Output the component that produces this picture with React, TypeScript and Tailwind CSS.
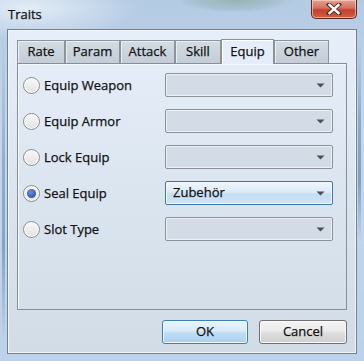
import React from "react";

const tabs = [
  { label: "Rate", w: "w-[48px]" },
  { label: "Param", w: "w-[55px]" },
  { label: "Attack", w: "w-[55px]" },
  { label: "Skill", w: "w-[46px]" },
  { label: "Equip", w: "w-[53px]", active: true },
  { label: "Other", w: "w-[55px]" },
];

const rows = [
  { label: "Equip Weapon" },
  { label: "Equip Armor" },
  { label: "Lock Equip" },
  { label: "Seal Equip", checked: true, value: "Zubehör" },
  { label: "Slot Type" },
];

function Arrow() {
  return (
    <svg width="9" height="5" viewBox="0 0 9 5" className="shrink-0">
      <path d="M0.5 0.5 H8.5 L4.5 4.5 Z" fill="#4f4f4f" />
    </svg>
  );
}

function Radio({ checked }: { checked?: boolean }) {
  return (
    <div className="w-[17px] h-[17px] rounded-full border border-[#8b8b8b] bg-[linear-gradient(180deg,#f8f8f8_0%,#e2e2e2_100%)] shadow-[inset_0_0_0_1px_#ffffff] flex items-center justify-center shrink-0">
      {checked && (
        <div className="w-[9px] h-[9px] rounded-full bg-[radial-gradient(circle_at_40%_35%,#6f93d8_0%,#2f58b0_70%,#24469a_100%)]" />
      )}
    </div>
  );
}

export default function App() {
  return (
    <div className="relative w-[364px] h-[361px] overflow-hidden flex flex-col px-[7px] pb-[7px] bg-[linear-gradient(180deg,#b4cbe4_0%,#c2d7ed_35%,#bcd2ea_100%)] font-['Open_Sans',sans-serif] text-[13px] text-[#111] [-webkit-text-stroke:0.25px_#111]">
      {/* glass decoration */}
      <div className="absolute left-[180px] top-[-14px] w-[110px] h-[26px] rounded-full bg-[radial-gradient(ellipse_at_center,#8aa79a_0%,#a3bccc_55%,transparent_75%)] opacity-70" />
      <div className="absolute left-0 top-0 w-[140px] h-[40px] bg-[radial-gradient(ellipse_at_20%_20%,#e3ecf6_0%,transparent_70%)]" />
      <div className="absolute left-[2px] top-[40px] w-[3px] h-[300px] bg-[linear-gradient(180deg,transparent_0%,#7f9dbd_40%,#6d8eb2_70%,transparent_100%)] opacity-70" />
      <div className="absolute right-[3px] top-[40px] w-[3px] h-[200px] bg-[linear-gradient(180deg,transparent_0%,#7896b8_40%,#6787ad_70%,transparent_100%)] opacity-70" />

      {/* title bar */}
      <div className="relative h-[29px] flex items-start justify-between shrink-0">
        <div className="pl-[1px] pt-[5px] text-[13px] text-[#111]">Traits</div>
        <div className="w-[46px] h-[19px] rounded-b-[5px] border border-t-0 border-[#5a2a24] bg-[linear-gradient(180deg,#e8a093_0%,#d4705d_45%,#c2412a_55%,#cf5f43_100%)] shadow-[inset_0_0_0_1px_rgba(255,220,210,0.6)] flex items-center justify-center">
          <svg width="16" height="12" viewBox="0 0 16 12">
            <path d="M3 1.5 L13 10.5 M13 1.5 L3 10.5" stroke="#4a2a26" strokeWidth="4.2" strokeLinecap="square" />
            <path d="M3.5 2 L12.5 10 M12.5 2 L3.5 10" stroke="#ffffff" strokeWidth="2.4" strokeLinecap="square" />
          </svg>
        </div>
      </div>

      {/* client area */}
      <div className="relative flex-1 flex flex-col border border-[#6e8197] bg-[linear-gradient(180deg,#e6eef9_0%,#dbe5f0_50%,#d2dce7_100%)] shadow-[inset_0_0_0_1px_#f2f6fb] p-[9px]">
        {/* tabs */}
        <div className="flex items-end h-[24px] relative z-10">
          {tabs.map((t) =>
            t.active ? (
              <div
                key={t.label}
                className={`${t.w} h-[25px] -mb-[1px] border border-b-0 border-[#8a9099] bg-[#e4edf8] shadow-[inset_1px_1px_0_#ffffff] flex items-center justify-center pb-[1px]`}
              >
                {t.label}
              </div>
            ) : (
              <div
                key={t.label}
                className={`${t.w} h-[23px] border border-b-0 border-[#8c939b] bg-[linear-gradient(180deg,#d3dbe4_0%,#c4cdd7_100%)] shadow-[inset_1px_1px_0_#e9eef3] flex items-center justify-center`}
              >
                {t.label}
              </div>
            )
          )}
        </div>

        {/* panel */}
        <div className="h-[247px] border border-[#898e96] shadow-[inset_1px_1px_0_#f6f9fc] pt-[9px] pl-[5px] flex flex-col gap-[12px]">
          {rows.map((r) => (
            <div key={r.label} className="flex items-center h-[24px]">
              <div className="w-[142px] flex items-center gap-[4px]">
                <Radio checked={r.checked} />
                <span className="leading-none">{r.label}</span>
              </div>
              {r.value ? (
                <div className="w-[168px] h-[24px] rounded-[2px] border border-[#3f78a8] bg-[linear-gradient(180deg,#edf6fe_0%,#dcebf9_45%,#c6ddf2_55%,#cfe3f5_100%)] shadow-[inset_0_0_0_1px_#f4f9fe] flex items-center justify-between pl-[7px] pr-[7px]">
                  <span>{r.value}</span>
                  <Arrow />
                </div>
              ) : (
                <div className="w-[168px] h-[24px] rounded-[2px] border border-[#8d9299] bg-[#d3dce6] shadow-[inset_0_0_0_1px_#ebf0f5] flex items-center justify-end pr-[7px]">
                  <Arrow />
                </div>
              )}
            </div>
          ))}
        </div>

        {/* buttons */}
        <div className="mt-[10px] flex justify-end gap-[11px]">
          <div className="w-[86px] h-[24px] rounded-[3px] border border-[#3c7fb1] bg-[linear-gradient(180deg,#e9f4fc_0%,#d8ebf9_45%,#bfdcf4_55%,#a9d0ef_100%)] shadow-[inset_0_0_0_1px_#f0f8fe] flex items-center justify-center">
            OK
          </div>
          <div className="w-[88px] h-[24px] rounded-[3px] border border-[#707070] bg-[linear-gradient(180deg,#f3f3f3_0%,#ebebeb_45%,#dddddd_55%,#cfcfcf_100%)] shadow-[inset_0_0_0_1px_#fbfbfb] flex items-center justify-center">
            Cancel
          </div>
        </div>
      </div>
    </div>
  );
}
